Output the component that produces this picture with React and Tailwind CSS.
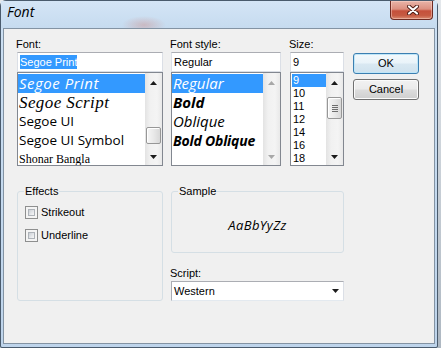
import React from "react";

function Arrow({ dir, disabled }) {
  const fill = disabled ? "#a8a8a8" : "#1c1c1c";
  return (
    <svg width="7" height="4" viewBox="0 0 7 4">
      {dir === "up" ? (
        <polygon points="3.5,0 7,4 0,4" fill={fill} />
      ) : (
        <polygon points="0,0 7,0 3.5,4" fill={fill} />
      )}
    </svg>
  );
}

function Scrollbar({ thumbClass, grip, disabled }) {
  return (
    <div className="w-[17px] h-full flex flex-col bg-[linear-gradient(to_right,#e3e3e3,#f1f1f1_30%,#f4f4f4_70%,#e9e9e9)]">
      <div className="h-[17px] flex justify-center pt-[8px]">
        <Arrow dir="up" disabled={disabled} />
      </div>
      <div className="flex-1 flex flex-col px-[1px]">
        {thumbClass && (
          <div
            className={
              thumbClass +
              " border border-[#979797] rounded-[2px] bg-[linear-gradient(to_right,#f6f6f6,#e9e9e9_50%,#d8d8d8)] shadow-[inset_1px_1px_0_#ffffff] flex flex-col items-center justify-center gap-[1px]"
            }
          >
            {grip && (
              <>
                <div className="w-[6px] h-[1px] bg-[#6e6e6e]" />
                <div className="w-[6px] h-[1px] bg-[#6e6e6e]" />
                <div className="w-[6px] h-[1px] bg-[#6e6e6e]" />
                <div className="w-[6px] h-[1px] bg-[#6e6e6e]" />
              </>
            )}
          </div>
        )}
      </div>
      <div className="h-[17px] flex justify-center pt-[7px]">
        <Arrow dir="down" disabled={disabled} />
      </div>
    </div>
  );
}

function TextBox({ children }) {
  return (
    <div className="h-[20px] border border-[#dbdfe6] border-t-[#abadb3] bg-white flex items-center pl-[2px]">
      {children}
    </div>
  );
}

function Check({ label }) {
  return (
    <div className="flex items-center h-[13px] ml-[1px]">
      <div className="w-[13px] h-[13px] border border-[#8e8f8f] bg-[#f4f4f4] p-[2px]">
        <div className="w-full h-full border border-[#aeb3b9] bg-[linear-gradient(135deg,#cbcfd5,#e6e8eb_60%,#f7f7f7)]" />
      </div>
      <span className="ml-[3px] leading-[13px]">{label}</span>
    </div>
  );
}

export default function App() {
  return (
    <div className="w-[441px] h-[348px] flex bg-[linear-gradient(to_bottom,#e4e8ec,#aeb8c2)] font-['Liberation_Sans',Arial,sans-serif] text-[11px] leading-[13px] text-black overflow-hidden">
      <div className="w-[438px] h-[348px] flex flex-col border border-[#4a5b6d] rounded-t-[6px] rounded-b-[2px] bg-[linear-gradient(to_bottom,#cde0f3,#c8dcf0_30%,#bed4eb)]">
        <div className="h-[27px] flex justify-between pl-[6px] pr-[4px] bg-[radial-gradient(ellipse_22px_9px_at_143px_24px,rgba(205,120,110,0.35),transparent),linear-gradient(to_bottom,#d4e5f6,#c6dbef)]">
          <div className="pt-[1px] font-['Open_Sans',sans-serif] italic text-[14px] leading-[19px] text-black">
            Font
          </div>
          <div className="w-[43px] h-[19px] border border-t-0 border-[#6f2b22] rounded-b-[4px] bg-[linear-gradient(to_bottom,#e9b4a8_0%,#dc9080_45%,#c5503b_55%,#c65a42_80%,#d98a70_100%)] shadow-[inset_0_0_0_1px_rgba(255,220,210,0.45)] flex items-center justify-center pl-[2px]">
            <svg width="12" height="10" viewBox="0 0 12 10">
              <path d="M2 1.5 L10 8.5 M10 1.5 L2 8.5" stroke="#4c1a12" strokeWidth="4" strokeLinecap="round" />
              <path d="M2 1.5 L10 8.5 M10 1.5 L2 8.5" stroke="#ffffff" strokeWidth="2.2" strokeLinecap="round" />
            </svg>
          </div>
        </div>
        <div className="flex-1 mx-[2px] mb-[3px] border border-[#8393a3] bg-[#f0f0f0] pl-[13px] pt-[9px] flex flex-col">
          <div className="flex">
            <div className="w-[146px] flex flex-col">
              <div className="h-[13px] mb-[1px] -ml-px">Font:</div>
              <TextBox>
                <span className="bg-[#3399ff] text-white leading-[14px]">Segoe Print</span>
              </TextBox>
              <div className="h-[94px] border border-[#828790] bg-white flex">
                <div className="flex-1 pt-[1px] overflow-hidden flex flex-col whitespace-nowrap">
                  <div className="h-[19px] shrink-0 bg-[#3399ff] text-white flex items-center pl-[1px] font-['Open_Sans',sans-serif] italic text-[15px] tracking-[0.5px] leading-[19px]">
                    Segoe Print
                  </div>
                  <div className="h-[19px] shrink-0 flex items-center pl-[1px] font-['Liberation_Serif',serif] italic text-[17px] tracking-[0.4px] leading-[19px]">
                    Segoe Script
                  </div>
                  <div className="h-[19px] shrink-0 flex items-center pl-[1px] font-['Open_Sans',sans-serif] text-[13.5px] leading-[19px]">
                    Segoe UI
                  </div>
                  <div className="h-[19px] shrink-0 flex items-center pl-[1px] font-['Open_Sans',sans-serif] text-[13.5px] leading-[19px]">
                    Segoe UI Symbol
                  </div>
                  <div className="h-[19px] shrink-0 flex items-center pl-[1px] font-['Liberation_Serif',serif] text-[12px] leading-[19px]">
                    Shonar Bangla
                  </div>
                </div>
                <Scrollbar thumbClass="mt-[37px] h-[17px]" />
              </div>
            </div>

            <div className="w-[110px] ml-[8px] flex flex-col">
              <div className="h-[13px] mb-[1px] -ml-px">Font style:</div>
              <TextBox>
                <span className="leading-[14px]">Regular</span>
              </TextBox>
              <div className="h-[94px] border border-[#828790] bg-white flex">
                <div className="flex-1 min-w-0 pt-[1px] overflow-hidden flex flex-col whitespace-nowrap font-['Open_Sans',sans-serif] italic text-[15px] leading-[19px]">
                  <div className="h-[19px] shrink-0 bg-[#3399ff] text-white flex items-center pl-[1px]">Regular</div>
                  <div className="h-[19px] shrink-0 flex items-center pl-[1px] font-bold">Bold</div>
                  <div className="h-[19px] shrink-0 flex items-center pl-[1px]">Oblique</div>
                  <div className="h-[19px] shrink-0 flex items-center pl-[1px] font-bold text-[14px] tracking-[-0.2px]">Bold Oblique</div>
                </div>
                <Scrollbar disabled />
              </div>
            </div>

            <div className="w-[54px] ml-[9px] flex flex-col">
              <div className="h-[13px] mb-[1px] -ml-px">Size:</div>
              <TextBox>
                <span className="leading-[14px]">9</span>
              </TextBox>
              <div className="h-[94px] border border-[#828790] bg-white flex">
                <div className="flex-1 pt-[1px] pl-[1px] overflow-hidden flex flex-col">
                  <div className="h-[13px] shrink-0 bg-[#3399ff] text-white pl-[1px] leading-[13px]">9</div>
                  <div className="h-[13px] shrink-0 pl-[1px] leading-[13px]">10</div>
                  <div className="h-[13px] shrink-0 pl-[1px] leading-[13px]">11</div>
                  <div className="h-[13px] shrink-0 pl-[1px] leading-[13px]">12</div>
                  <div className="h-[13px] shrink-0 pl-[1px] leading-[13px]">14</div>
                  <div className="h-[13px] shrink-0 pl-[1px] leading-[13px]">16</div>
                  <div className="h-[13px] shrink-0 pl-[1px] leading-[13px]">18</div>
                </div>
                <Scrollbar thumbClass="mt-[7px] h-[22px]" grip />
              </div>
            </div>

            <div className="w-[66px] ml-[9px] pt-[15px] flex flex-col gap-[5px]">
              <div className="h-[21px] border border-[#3c7fb1] rounded-[3px] bg-[linear-gradient(to_bottom,#f3f9fc_0%,#e9f3f9_48%,#d9e8f2_52%,#cfe2ee_100%)] shadow-[inset_0_0_0_1px_#bfe6f8] flex items-center justify-center">
                OK
              </div>
              <div className="h-[21px] border border-[#707070] rounded-[3px] bg-[linear-gradient(to_bottom,#f2f2f2_0%,#ebebeb_48%,#dddddd_52%,#cfcfcf_100%)] shadow-[inset_0_0_0_1px_#fbfbfb] flex items-center justify-center">
                Cancel
              </div>
            </div>
          </div>

          <div className="flex mt-[19px]">
            <fieldset className="w-[146px] h-[116px] border border-[#d5dfe5] rounded-[3px] pl-[6px]">
              <legend className="px-[1px] leading-[12px]">Effects</legend>
              <div className="pt-[9px] flex flex-col gap-[10px]">
                <Check label="Strikeout" />
                <Check label="Underline" />
              </div>
            </fieldset>

            <div className="w-[173px] ml-[8px] flex flex-col">
              <fieldset className="h-[68px] border border-[#d5dfe5] rounded-[3px] pl-[6px]">
                <legend className="px-[1px] leading-[12px]">Sample</legend>
                <div className="h-[55px] -ml-[6px] flex items-center justify-center pt-[2px] font-['Open_Sans',sans-serif] italic text-[13px] tracking-[0.4px]">
                  AaBbYyZz
                </div>
              </fieldset>
              <div className="mt-[14px] h-[13px] -ml-px">Script:</div>
              <div className="mt-[1px] h-[20px] border border-[#abadb3] border-b-[#e3e9ef] border-r-[#dbdfe6] bg-white flex items-center justify-between pl-[2px] pr-[4px]">
                <span>Western</span>
                <Arrow dir="down" />
              </div>
            </div>
          </div>
        </div>
      </div>
    </div>
  );
}
